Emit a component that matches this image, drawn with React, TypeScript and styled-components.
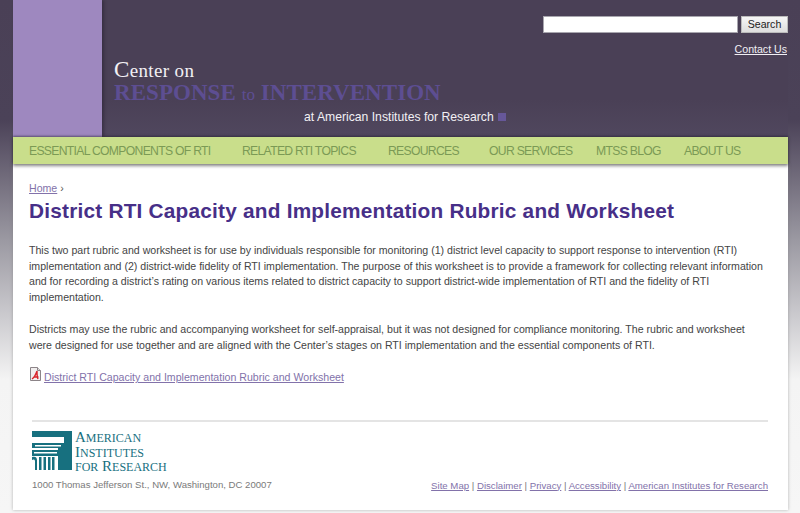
import React from "react";
import styled, { createGlobalStyle } from "styled-components";

const Global = createGlobalStyle`
  html, body { margin: 0; padding: 0; height: 513px; overflow: hidden; }
  body { font-family: "Liberation Sans", Arial, sans-serif; }
`;

const Page = styled.div`
  width: 800px;
  height: 513px;
  overflow: hidden;
  background: linear-gradient(180deg, #4a4056 0, #4b4258 120px, #9b99a2 240px, #f4f4f4 380px, #f6f6f6 100%);
  display: flex;
  flex-direction: column;
`;

const Frame = styled.div`
  margin: 0 13px;
  width: 775px;
  display: flex;
  flex-direction: column;
`;

const Header = styled.header`
  height: 137px;
  display: flex;
  background: linear-gradient(180deg, #4a4056 0, #4a4056 100px, #50475e 137px);
`;

const Stripe = styled.div`
  width: 89px;
  background: #9e88bf;
  box-shadow: 2px 0 3px rgba(30, 24, 40, 0.45);
`;

const Masthead = styled.div`
  flex: 1;
  position: relative;
  padding-left: 12px;
  display: flex;
  flex-direction: column;
`;

const SearchRow = styled.form`
  position: absolute;
  top: 16px;
  right: 0;
  display: flex;
  gap: 3px;
`;

const SearchInput = styled.input`
  width: 195px;
  height: 17px;
  box-sizing: border-box;
  border: 1px solid #a8a6ae;
  background: #fff;
  padding: 0;
`;

const SearchButton = styled.button`
  width: 47px;
  height: 17px;
  box-sizing: border-box;
  border: 1px solid #bbb;
  background: linear-gradient(180deg, #f6f6f6, #dedede);
  color: #222;
  font: 10.6px "Liberation Sans", Arial, sans-serif;
  padding: 0;
  line-height: 15px;
`;

const Contact = styled.a`
  position: absolute;
  top: 42px;
  right: 1px;
  color: #f1eff4;
  font-size: 10.6px;
  line-height: 14px;
  text-decoration: underline;
`;

const Brand = styled.div`
  margin-top: 58px;
  display: flex;
  flex-direction: column;
`;

const CenterOn = styled.div`
  font-family: "Liberation Serif", serif;
  color: #f2f0f4;
  font-size: 19px;
  line-height: 24px;
  height: 23px;
  letter-spacing: 0.35px;
`;

const BigCap = styled.span`
  font-size: 23px;
`;

const Response = styled.div`
  font-family: "Liberation Serif", serif;
  font-weight: bold;
  color: #5d4e92;
  font-size: 23px;
  line-height: 24px;
  letter-spacing: 0.05px;
  white-space: nowrap;
`;

const To = styled.span`
  font-weight: normal;
  font-size: 17px;
`;

const AtLine = styled.div`
  margin-top: 3px;
  padding-left: 190px;
  display: flex;
  align-items: center;
  gap: 4px;
  color: #f2f0f4;
  font-size: 12.2px;
  line-height: 14px;
`;

const Square = styled.span`
  width: 8px;
  height: 8px;
  background: #665799;
`;

const Nav = styled.nav`
  height: 27px;
  background: #c9de8b;
  display: flex;
  align-items: center;
  padding-left: 16px;
  box-shadow: 0 -1px 2px rgba(30, 24, 40, 0.5), 0 2px 3px rgba(40, 40, 40, 0.55);
  position: relative;
  z-index: 1;
`;

const NavItem = styled.a<{ $w: number }>`
  width: ${(p) => p.$w}px;
  flex: none;
  color: #7b9a55;
  font-size: 12.2px;
  letter-spacing: -0.7px;
  white-space: nowrap;
`;

const Content = styled.main`
  height: 346px;
  background: #fff;
  box-shadow: 0 0 3px rgba(120, 120, 120, 0.55);
  padding: 17px 19px 0 16px;
  box-sizing: border-box;
  display: flex;
  flex-direction: column;
`;

const Crumb = styled.div`
  font-size: 10.6px;
  line-height: 14px;
  color: #555;
`;

const PurpleLink = styled.a`
  color: #8272aa;
  text-decoration: underline;
`;

const Title = styled.h1`
  margin: 3px 0 0;
  color: #472f88;
  font-size: 20.8px;
  line-height: 26px;
  font-weight: bold;
  letter-spacing: 0.22px;
  white-space: nowrap;
`;

const Para = styled.p`
  margin: 19px 0 0;
  color: #444;
  font-size: 10.6px;
  line-height: 15.7px;
  &+& { margin-top: 16px; }
`;

const Doc = styled.div`
  margin-top: 16px;
  display: flex;
  gap: 3px;
  font-size: 10.6px;
  line-height: 16px;
`;

const PdfSvg = styled.svg`
  flex: none;
  margin: -2px 0 0 1px;
`;

const Rule = styled.hr`
  margin: 35px 1px 0 3px;
  border: 0;
  height: 2px;
  background: #e4e4e4;
`;

const Footer = styled.footer`
  margin: 9px 1px 0 3px;
  display: flex;
  justify-content: space-between;
  align-items: flex-end;
`;

const LogoCol = styled.div`
  display: flex;
  flex-direction: column;
`;

const Logo = styled.div`
  display: flex;
  gap: 3px;
`;

const LogoText = styled.div`
  font-family: "Liberation Serif", serif;
  color: #17707f;
  font-size: 15px;
  line-height: 13.5px;
  white-space: nowrap;
`;

const LogoLine = styled.div``;

const Small = styled.span`
  font-size: 12px;
`;

const Address = styled.div`
  margin: 3px 0 1px;
  color: #7a7a7a;
  font-size: 9.6px;
  line-height: 14px;
`;

const FootLinks = styled.div`
  color: #777;
  font-size: 9.63px;
  line-height: 14px;
  white-space: nowrap;
`;

const PillarIcon = () => (
  <svg width="40" height="39" viewBox="0 0 40 39">
    <rect x="0" y="0" width="40" height="39" fill="#17707f" />
    <path d="M0 6H32V12H0ZM3 14H29V15.5H3ZM0 17H26V19H0ZM2 21H25V22.5H2Z" fill="#fff" />
    <path d="M0 25H26V39H0Z" fill="#fff" />
    <path d="M0 26C3 25 5 26 5 29V39H3V30C3 28.5 1.5 28 0 29ZM7 26H9.5V39H7ZM11.5 26H14V39H11.5ZM16 26H18.5V39H16ZM20 26H22.5V39H20Z" fill="#17707f" />
  </svg>
);

const PdfIcon = () => (
  <PdfSvg width="11" height="14" viewBox="0 0 11 14">
    <path d="M.5.5H7.5L10.5 3.5V13.5H.5Z" fill="#f1eeee" stroke="#8c8488" />
    <path d="M7.5.5V3.5H10.5" fill="#ddd" stroke="#8c8488" />
    <path d="M7 4C6 7 5 10 2 12M7 4C7 7 7 10 8 12M3.5 10H8.5" fill="none" stroke="#d8232a" strokeWidth="1.4" />
  </PdfSvg>
);

const nav: [string, number][] = [
  ["ESSENTIAL COMPONENTS OF RTI", 213],
  ["RELATED RTI TOPICS", 146],
  ["RESOURCES", 101],
  ["OUR SERVICES", 107],
  ["MTSS BLOG", 88],
  ["ABOUT US", 70],
];

export default function App() {
  return (
    <Page>
      <Global />
      <Frame>
        <Header>
          <Stripe />
          <Masthead>
            <SearchRow onSubmit={(e) => e.preventDefault()}>
              <SearchInput />
              <SearchButton>Search</SearchButton>
            </SearchRow>
            <Contact href="#">Contact Us</Contact>
            <Brand>
              <CenterOn><BigCap>C</BigCap>enter on</CenterOn>
              <Response>RESPONSE <To>to</To> INTERVENTION</Response>
              <AtLine>at American Institutes for Research <Square /></AtLine>
            </Brand>
          </Masthead>
        </Header>
        <Nav>
          {nav.map(([t, w]) => (
            <NavItem key={t} $w={w}>{t}</NavItem>
          ))}
        </Nav>
        <Content>
          <Crumb><PurpleLink href="#">Home</PurpleLink> ›</Crumb>
          <Title>District RTI Capacity and Implementation Rubric and Worksheet</Title>
          <Para>This two part rubric and worksheet is for use by individuals responsible for monitoring (1) district level capacity to support response to intervention (RTI) implementation and (2) district-wide fidelity of RTI implementation. The purpose of this worksheet is to provide a framework for collecting relevant information and for recording a district’s rating on various items related to district capacity to support district-wide implementation of RTI and the fidelity of RTI implementation.</Para>
          <Para>Districts may use the rubric and accompanying worksheet for self-appraisal, but it was not designed for compliance monitoring. The rubric and worksheet were designed for use together and are aligned with the Center’s stages on RTI implementation and the essential components of RTI.</Para>
          <Doc><PdfIcon /><PurpleLink href="#">District RTI Capacity and Implementation Rubric and Worksheet</PurpleLink></Doc>
          <Rule />
          <Footer>
            <LogoCol>
              <Logo>
                <PillarIcon />
                <LogoText>
                  <LogoLine>A<Small>MERICAN</Small></LogoLine>
                  <LogoLine>I<Small>NSTITUTES</Small></LogoLine>
                  <LogoLine><Small>FOR</Small> R<Small>ESEARCH</Small></LogoLine>
                </LogoText>
              </Logo>
              <Address>1000 Thomas Jefferson St., NW, Washington, DC 20007</Address>
            </LogoCol>
            <FootLinks>
              <PurpleLink href="#">Site Map</PurpleLink> | <PurpleLink href="#">Disclaimer</PurpleLink> | <PurpleLink href="#">Privacy</PurpleLink> | <PurpleLink href="#">Accessibility</PurpleLink> | <PurpleLink href="#">American Institutes for Research</PurpleLink>
            </FootLinks>
          </Footer>
        </Content>
      </Frame>
    </Page>
  );
}
